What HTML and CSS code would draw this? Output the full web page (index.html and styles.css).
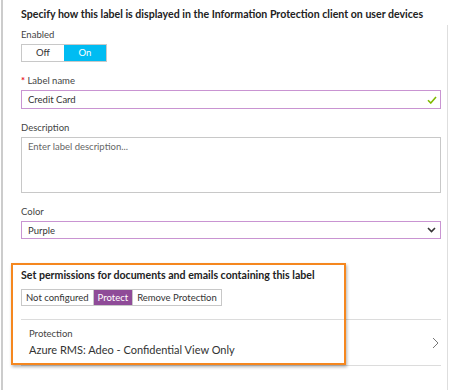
FILE: index.html
```html
<!DOCTYPE html>
<html lang="en">
<head>
    <meta charset="UTF-8">
    <title>Label settings</title>
    <link rel="stylesheet" href="styles.css">
</head>
<body>
    <div class="page">
        <div class="content">
            <h2 class="section-title">Specify how this label is displayed in the Information Protection client on user devices</h2>

            <div class="field-label first">Enabled</div>
            <div class="toggle">
                <span class="toggle-option">Off</span>
                <span class="toggle-option active-on">On</span>
            </div>

            <div class="field-label"><span class="required">*</span> Label name</div>
            <div class="text-input">
                <span>Credit Card</span>
                <svg class="check" width="10" height="8" viewBox="0 0 10 8">
                    <path d="M1 4.2 L3.8 7 L9 1" fill="none" stroke="#7fba00" stroke-width="1.6"/>
                </svg>
            </div>

            <div class="field-label">Description</div>
            <div class="text-area">Enter label description...</div>

            <div class="field-label">Color</div>
            <div class="text-input select">
                <span>Purple</span>
                <svg class="chevron-down" width="9" height="6" viewBox="0 0 9 6">
                    <path d="M1 1 L4.5 4.5 L8 1" fill="none" stroke="#333" stroke-width="1.6"/>
                </svg>
            </div>

            <h2 class="section-title permissions">Set permissions for documents and emails containing this label</h2>
            <div class="segments">
                <span class="segment">Not configured</span>
                <span class="segment active-protect">Protect</span>
                <span class="segment">Remove Protection</span>
            </div>

            <div class="nav-row">
                <div>
                    <div class="nav-label">Protection</div>
                    <div class="nav-value">Azure RMS: Adeo - Confidential View Only</div>
                </div>
                <svg class="chevron-right" width="7" height="12" viewBox="0 0 7 12">
                    <path d="M1 1 L6 6 L1 11" fill="none" stroke="#777" stroke-width="1"/>
                </svg>
            </div>
        </div>
        <div class="scroll-track"></div>

        <!-- highlight annotation -->
        <div class="highlight"></div>
    </div>
</body>
</html>
```

FILE: styles.css
```css
body {
    margin: 0;
    background-color: white;
    font-family: 'Lato', 'Open Sans', sans-serif;
    color: #333;
}
.page {
    position: relative;
    display: flex;
    height: 390px;
    margin-left: 1px;
    border-left: 2px solid #cccccc;
    padding-left: 18px;
    box-sizing: border-box;
}
.content {
    width: 420px;
    flex-shrink: 0;
}
.scroll-track {
    width: 1px;
    margin-top: 25px;
    margin-left: 6px;
    background-color: #dedede;
}
.section-title {
    font-size: 10.6px;
    font-weight: bold;
    color: #222;
    margin: 7px 0 0;
    line-height: 14px;
    white-space: nowrap;
}
.field-label {
    font-size: 9.5px;
    line-height: 14px;
    color: #444;
    margin-top: 12px;
    margin-bottom: 2px;
}
.field-label.first {
    margin-top: 7px;
}
.required {
    color: #e81123;
    font-weight: bold;
}
.toggle {
    display: flex;
    width: 86px;
    height: 18px;
    border: 1px solid #c8c8c8;
    box-sizing: border-box;
}
.toggle-option {
    flex: 1;
    font-size: 9.5px;
    line-height: 16px;
    text-align: center;
}
.active-on {
    background-color: #00bcf2;
    color: white;
}
.text-input {
    display: flex;
    align-items: center;
    justify-content: space-between;
    height: 19px;
    border: 1px solid #c994d2;
    box-sizing: border-box;
    padding: 0 3px 0 6px;
    font-size: 9.5px;
}
.text-area {
    height: 56px;
    border: 1px solid #c8c8c8;
    box-sizing: border-box;
    padding: 3px 6px;
    font-size: 9.5px;
    color: #666;
}
.select {
    height: 18px;
    padding-right: 4px;
}
.permissions {
    margin-top: 29px;
}
.segments {
    display: flex;
    width: fit-content;
    height: 17px;
    margin-top: 7px;
    border: 1px solid #c8c8c8;
    box-sizing: border-box;
}
.segment {
    font-size: 9.5px;
    line-height: 15px;
    padding: 0 4px;
}
.segment + .segment {
    border-left: 1px solid #c8c8c8;
}
.active-protect {
    background-color: #8f4b98;
    color: white;
    border-left: none;
}
.nav-row {
    display: flex;
    align-items: center;
    justify-content: space-between;
    margin-top: 13px;
    height: 47px;
    border-top: 1px solid #dcdcdc;
    border-bottom: 1px solid #dcdcdc;
    box-sizing: border-box;
    padding: 0 2px 0 8px;
}
.nav-label {
    font-size: 9.5px;
    color: #444;
    line-height: 14px;
}
.nav-value {
    font-size: 11px;
    color: #333;
    line-height: 18px;
}
.highlight {
    position: absolute;
    left: 8px;
    top: 263px;
    width: 335px;
    height: 102px;
    border: 2px solid #f5871f;
    box-sizing: border-box;
    box-shadow: 1px 2px 3px rgba(0, 0, 0, 0.3);
}
```
